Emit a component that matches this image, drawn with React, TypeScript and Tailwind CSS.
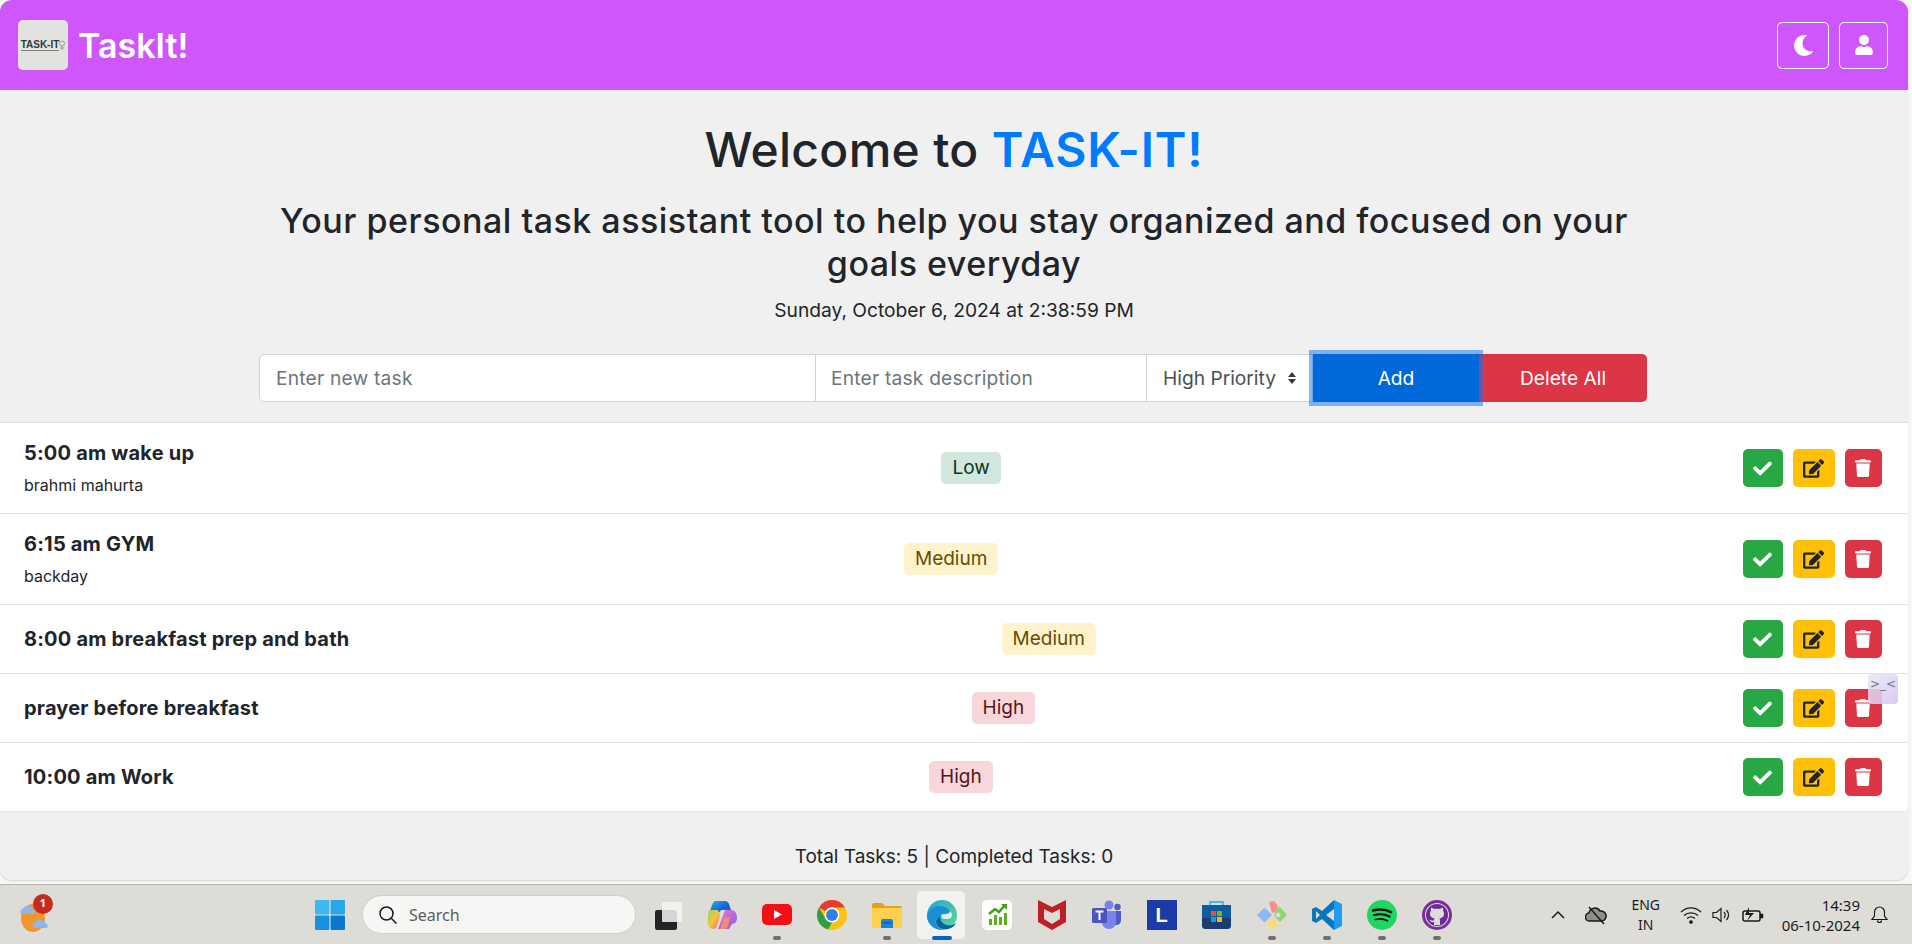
import React from 'react';
import { FaCheck, FaEdit, FaMoon, FaTrash, FaUser } from 'react-icons/fa';

const tasks = [
  { title: '5:00 am wake up', desc: 'brahmi mahurta', level: 'Low' },
  { title: '6:15 am GYM', desc: 'backday', level: 'Medium' },
  { title: '8:00 am breakfast prep and bath', level: 'Medium' },
  { title: 'prayer before breakfast', level: 'High' },
  { title: '10:00 am Work', level: 'High' },
];

const badgeClass: Record<string, string> = {
  Low: 'bg-[#d1e7dd] text-[#0a3622]',
  Medium: 'bg-[#fff3cd] text-[#664d03]',
  High: 'bg-[#f8d7da] text-[#58151c]',
};

const TaskRow: React.FC<{ title: string; desc?: string; level: string }> = ({ title, desc, level }) => (
  <div className={`flex items-center justify-between bg-white border-b border-[#dee2e6] pl-6 pr-[26px] ${desc ? 'h-[91px]' : 'h-[69px]'}`}>
    <div className={desc ? 'mb-[2px]' : ''}>
      <p className="text-[20px] leading-[30px] font-bold tracking-[0.2px] text-[#212529]">{title}</p>
      {desc && <p className="text-[16px] leading-6 mt-[5px] text-[#212529]">{desc}</p>}
    </div>
    <span className={`ml-[5px] rounded-[5px] h-8 px-[11px] flex items-center text-[19px] ${badgeClass[level]}`}>{level}</span>
    <div className="flex items-center gap-[10px]">
      <button className="w-10 h-[38px] rounded-[5px] bg-[#28a745] text-white flex items-center justify-center"><FaCheck size={19} /></button>
      <button className="w-[42px] h-[38px] rounded-[5px] bg-[#ffc107] text-[#212529] flex items-center justify-center"><FaEdit size={21} /></button>
      <button className="w-[37px] h-[38px] rounded-[5px] bg-[#dc3545] text-white flex items-center justify-center"><FaTrash size={18} /></button>
    </div>
  </div>
);

const WeatherIcon = () => (
  <svg width="32" height="36" viewBox="0 0 32 36">
    <ellipse cx="15" cy="21" rx="12" ry="14" fill="#f0962a" />
    <path d="M3 17a4 4 0 0 1 3-6 5 5 0 0 1 9 1 3 3 0 0 1 1 5z" fill="#8fb5ea" />
    <path d="M15 31a4 4 0 0 1 3-6 5 5 0 0 1 9 1 3 3 0 0 1 2 5z" fill="#8fb5ea" />
  </svg>
);

const StartIcon = () => (
  <svg width="30" height="30" viewBox="0 0 30 30">
    <rect x="0" y="0" width="14.4" height="14.4" rx="1" fill="#3cb9f0" />
    <rect x="15.6" y="0" width="14.4" height="14.4" rx="1" fill="#2aa7ea" />
    <rect x="0" y="15.6" width="14.4" height="14.4" rx="1" fill="#1791e0" />
    <rect x="15.6" y="15.6" width="14.4" height="14.4" rx="1" fill="#0b78d0" />
  </svg>
);

const SnapIcon = () => (
  <svg width="30" height="30" viewBox="0 0 30 30">
    <rect x="3" y="10" width="22" height="20" rx="2" fill="#232323" />
    <rect x="10" y="2" width="20" height="20" rx="1" fill="#f4f4f4" fillOpacity="0.85" />
  </svg>
);

const CopilotIcon = () => (
  <svg width="30" height="30" viewBox="0 0 30 30">
    <defs>
      <linearGradient id="cp1" x1="0" y1="0" x2="1" y2="1"><stop offset="0" stopColor="#27b4e8" /><stop offset="0.6" stopColor="#1a5fd0" /></linearGradient>
      <linearGradient id="cp2" x1="0" y1="0" x2="1" y2="1"><stop offset="0" stopColor="#9ad15a" /><stop offset="0.5" stopColor="#f6c53b" /><stop offset="1" stopColor="#f0637a" /></linearGradient>
      <linearGradient id="cp3" x1="0" y1="0" x2="1" y2="1"><stop offset="0" stopColor="#e87ad0" /><stop offset="1" stopColor="#8f5be0" /></linearGradient>
    </defs>
    <path d="M9 1h9c2 0 3 1 4 3l2 6H14l-3 4H2l3-9c1-3 2-4 4-4z" fill="url(#cp1)" />
    <path d="M2 10h9l2 6-3 10c-1 2-2 3-4 3-3 0-5-3-5-7 0-4 0-8 1-12z" fill="url(#cp2)" />
    <path d="M18 10h7c3 0 5 4 5 8 0 3-2 6-5 6l-3 5H11l7-19z" fill="url(#cp3)" />
    <path d="M13 29l4-11 6-1-2 9c-1 2-2 3-4 3z" fill="#f58a72" />
  </svg>
);

const YoutubeIcon = () => (
  <svg width="30" height="30" viewBox="0 0 30 30">
    <rect x="0" y="4" width="30" height="21" rx="5" fill="#f40f16" />
    <path d="M12 10l8 4.500-8 4.500z" fill="#fff" />
  </svg>
);

const ChromeIcon = () => (
  <svg width="30" height="30" viewBox="0 0 48 48">
    <circle cx="24" cy="24" r="24" fill="#fbc116" />
    <path d="M24 0a24 24 0 0 1 20.800 12H24a12 12 0 0 0-10.400 6L3.200 12A24 24 0 0 1 24 0z" fill="#e33b2e" />
    <path d="M3.200 12l10.400 18a12 12 0 0 0 10.400 6l-6.200 11.200A24 24 0 0 1 3.200 12z" fill="#2f9e44" />
    <circle cx="24" cy="24" r="12" fill="#fff" />
    <circle cx="24" cy="24" r="9.500" fill="#2f7fe8" />
  </svg>
);

const FolderIcon = () => (
  <svg width="30" height="30" viewBox="0 0 30 30">
    <path d="M0 5a2 2 0 0 1 2-2h8l3 3h15a2 2 0 0 1 2 2v2H0z" fill="#e4a11a" />
    <path d="M0 8h30v19a1 1 0 0 1-1 1H1a1 1 0 0 1-1-1z" fill="#fdd14f" />
    <path d="M9 21a2 2 0 0 1 2-2h8a2 2 0 0 1 2 2v7H9z" fill="#1b84d6" />
    <rect x="11" y="22" width="8" height="1.500" fill="#0d5ea8" />
  </svg>
);

const EdgeIcon = () => (
  <svg width="30" height="30" viewBox="0 0 30 30">
    <defs>
      <linearGradient id="eg1" x1="0" y1="0" x2="1" y2="1"><stop offset="0" stopColor="#2aa5d8" /><stop offset="1" stopColor="#5fd88a" /></linearGradient>
    </defs>
    <circle cx="15" cy="15" r="15" fill="url(#eg1)" />
    <path d="M0 16C1 9 7 6 12 6c6 0 11 3 12 8 0 3-3 4-7 4-3 0-4-1-4-2-3 1-5 4-4 8 1 3 4 5 7 6C7 30 0 24 0 16z" fill="#1b8fd6" />
    <path d="M13 16c-3 2-5 5-3 9 2 3 6 5 11 4 4-1 7-3 8-6-3 3-9 3-12 1-3-2-4-5-4-8z" fill="#0f5ea8" />
    <path d="M14 16c0 2 2 3 5 3 3 0 6-1 6-4 0-1-1-3-2-4 0 2-2 3-5 3-2 0-3 0-4 2z" fill="#fff" fillOpacity="0.85" />
  </svg>
);

const ChartIcon = () => (
  <svg width="30" height="30" viewBox="0 0 30 30">
    <rect width="30" height="30" rx="5" fill="#fff" />
    <path d="M7 14l6-5 4 3 6-7" stroke="#3aa514" strokeWidth="2.500" fill="none" />
    <path d="M19 4h6v6z" fill="#3aa514" />
    <rect x="7" y="19" width="3" height="6" fill="#5db11f" />
    <rect x="12" y="15" width="3" height="10" fill="#5db11f" />
    <rect x="17" y="17" width="3" height="8" fill="#5db11f" />
    <rect x="22" y="13" width="3" height="12" fill="#5db11f" />
  </svg>
);

const McafeeIcon = () => (
  <svg width="28" height="30" viewBox="0 0 28 30">
    <path d="M0 0l14 7 14-7v22l-14 8-14-8z" fill="#c01f26" />
    <path d="M6 9l8 4 8-4v10l-8 5-8-5z" fill="#dddcd7" />
  </svg>
);

const TeamsIcon = () => (
  <svg width="30" height="30" viewBox="0 0 30 30">
    <circle cx="17" cy="5" r="4.500" fill="#7b83eb" />
    <circle cx="25.500" cy="7" r="3.200" fill="#5059c9" />
    <path d="M21 11h8v9c0 3-2 5-5 5-1 0-2 0-3-1z" fill="#5059c9" />
    <path d="M10 11h14v11c0 4-3 7-7 7-4 0-7-3-7-7z" fill="#7b83eb" />
    <rect x="0" y="8" width="15" height="15" rx="1.500" fill="#4b53bc" />
    <path d="M3.500 11.500h8M7.500 11.500V20" stroke="#fff" strokeWidth="2" />
  </svg>
);

const LIcon = () => (
  <div className="w-[30px] h-[30px] bg-[#1c3aa8] flex items-center justify-center text-white font-bold text-[20px] font-['Liberation_Sans',sans-serif]">L</div>
);

const StoreIcon = () => (
  <svg width="30" height="30" viewBox="0 0 30 30">
    <path d="M8 5V2h13v3" stroke="#35c2f0" strokeWidth="1.800" fill="none" />
    <path d="M0 5h29v20a4 4 0 0 1-4 4H4a4 4 0 0 1-4-4z" fill="#0f5ca0" />
    <path d="M0 18h29v7a4 4 0 0 1-4 4H4a4 4 0 0 1-4-4z" fill="#1c3d72" />
    <rect x="9" y="11" width="5" height="5" fill="#f25022" />
    <rect x="15" y="11" width="5" height="5" fill="#7fba00" />
    <rect x="9" y="17" width="5" height="5" fill="#00a4ef" />
    <rect x="15" y="17" width="5" height="5" fill="#ffb900" />
  </svg>
);

const KrakenIcon = () => (
  <svg width="30" height="30" viewBox="0 0 30 30">
    <path d="M15 15L7.500 7.500 0 15l7.500 7.500z" fill="#8cb8f8" />
    <path d="M12 2l5-1 4 5-3 6-3 1z" fill="#f98b8b" />
    <path d="M19 9l4-2 7 8-7 7-6-6z" fill="#8fd46c" />
    <circle cx="21" cy="15" r="2.500" fill="#dddcd7" />
    <path d="M9 23l6-6 7 7-7 6z" fill="#f8dc7a" />
  </svg>
);

const VscodeIcon = () => (
  <svg width="30" height="30" viewBox="0 0 30 30">
    <path d="M22 0l8 4v22l-8 4-12-12 12-9z" fill="#1f9cf0" />
    <path d="M22 0v30L10 19l-6 4-4-2v-12l4-2 6 4z" fill="#0a76c0" />
    <path d="M22 9l-8 6 8 6z" fill="#dddcd7" />
    <path d="M4 11v8l4-4z" fill="#dddcd7" />
  </svg>
);

const SpotifyIcon = () => (
  <svg width="30" height="30" viewBox="0 0 30 30">
    <circle cx="15" cy="15" r="15" fill="#1ed760" />
    <path d="M6 10.500c6-1.500 13-1 18 1.700" stroke="#111" strokeWidth="2.600" strokeLinecap="round" fill="none" />
    <path d="M7 15c5-1.200 11-.8 15.500 1.500" stroke="#111" strokeWidth="2.200" strokeLinecap="round" fill="none" />
    <path d="M8 19.500c4-1 9-.6 12.500 1.200" stroke="#111" strokeWidth="1.800" strokeLinecap="round" fill="none" />
  </svg>
);

const GithubIcon = () => (
  <svg width="30" height="30" viewBox="0 0 30 30">
    <circle cx="15" cy="15" r="13.500" fill="#dddcd7" stroke="#7a2e9e" strokeWidth="3" />
    <circle cx="15" cy="15" r="11" fill="#6e2a96" />
    <path d="M12 25v-3c-3 .6-4-1-4.500-2.500.8 0 1.600 1.500 4.500 1 0-1 .3-1.500.6-2-2.500-.5-4.600-1.600-4.600-5 0-1.200.4-2 1-2.800-.2-.6-.3-1.700.1-3 1.200 0 2.200.7 3 1.300 1.600-.4 4.200-.4 5.800 0 .8-.6 1.800-1.300 3-1.300.4 1.300.3 2.400.1 3 .6.800 1 1.600 1 2.800 0 3.400-2.100 4.500-4.600 5 .4.500.6 1.100.6 2v4.500z" fill="#dddcd7" />
  </svg>
);

const apps: { el: React.ReactNode; dot?: boolean }[] = [
  { el: <SnapIcon /> },
  { el: <CopilotIcon /> },
  { el: <YoutubeIcon />, dot: true },
  { el: <ChromeIcon /> },
  { el: <FolderIcon />, dot: true },
  { el: <EdgeIcon /> },
  { el: <ChartIcon /> },
  { el: <McafeeIcon /> },
  { el: <TeamsIcon /> },
  { el: <LIcon /> },
  { el: <StoreIcon /> },
  { el: <KrakenIcon />, dot: true },
  { el: <VscodeIcon />, dot: true },
  { el: <SpotifyIcon />, dot: true },
  { el: <GithubIcon />, dot: true },
];

const Taskbar = () => (
  <div className="h-[60px] shrink-0 bg-[#dddcd7] border-t border-[#b5b5b2] flex items-center font-['Noto_Sans',sans-serif] text-[#1c1c1c]">
    <div className="relative ml-[18px] w-[32px] h-[36px]">
      <WeatherIcon />
      <span className="absolute -top-[3px] left-[15px] w-5 h-5 rounded-full bg-[#c42b1c] text-white text-[11px] font-bold flex items-center justify-center">1</span>
    </div>
    <div className="ml-[265px]"><StartIcon /></div>
    <div className="ml-[17px] w-[274px] h-[39px] rounded-full bg-[#f6f6f5] border border-[#cfcfca] flex items-center pl-[15px] gap-[11px] text-[16px] text-[#5d5d5d]">
      <svg width="20" height="20" viewBox="0 0 20 20" fill="none" stroke="#1a1a1a" strokeWidth="1.500"><circle cx="8.500" cy="8.500" r="6.500" /><path d="M13.500 13.500l5 5" /></svg>
      Search
    </div>
    <div className="flex ml-[3px]">
      {apps.map((a, i) => (
        <div key={i} className="relative w-[55px] h-[48px] flex items-center justify-center">
          {i === 5 && <div className="absolute left-[3px] right-[4px] inset-y-0 rounded-[5px] bg-[#f2f2f1]" />}
          <div className="relative">{a.el}</div>
          {a.dot && <span className="absolute -bottom-[1px] left-[24px] w-2 h-[4px] rounded-full bg-[#6f6f6f]" />}
          {i === 5 && <span className="absolute -bottom-[1px] left-[18px] w-5 h-[4px] rounded-full bg-[#0067c0]" />}
        </div>
      ))}
    </div>
    <div className="flex items-center ml-auto mr-[24px]">
      <svg width="14" height="14" viewBox="0 0 14 14" fill="none" stroke="#1a1a1a" strokeWidth="1.500"><path d="M1 10l6-6 6 6" /></svg>
      <svg className="ml-[20px]" width="22" height="20" viewBox="0 0 22 20" fill="#8f8f8c" stroke="#1a1a1a" strokeWidth="1.500"><path d="M5 16a4 4 0 0 1-1-8 6 6 0 0 1 11-2 5 5 0 0 1 2 10z" /><path d="M4 2l15 17" /></svg>
      <div className="ml-[19px] w-[40px] text-center text-[14px] leading-5">ENG<br />IN</div>
      <svg className="ml-[14px]" width="22" height="18" viewBox="0 0 22 18" fill="none" stroke="#1a1a1a" strokeWidth="1.300"><path d="M1 6c6-5.500 14-5.500 20 0M4 9.500c4-3.500 10-3.500 14 0M7 12.500c2.500-2 5.500-2 8 0" /><circle cx="11" cy="16" r="1.200" fill="#1a1a1a" /></svg>
      <svg className="ml-[10px]" width="20" height="18" viewBox="0 0 20 18" fill="none" stroke="#1a1a1a" strokeWidth="1.200"><path d="M1 6.500h3.500L9 2.500v13l-4.500-4H1zM12 6c1.500 1.500 1.500 4.500 0 6M14.500 4c2.500 3 2.500 7 0 10" /></svg>
      <svg className="ml-[10px]" width="22" height="18" viewBox="0 0 22 18" fill="none" stroke="#1a1a1a" strokeWidth="1.500"><rect x="1" y="5" width="17" height="10" rx="2" /><path d="M18 8.500h2.500v3H18" fill="#1a1a1a" /><path d="M7 1L3 9h5l-3 6 7-8H7z" fill="#1a1a1a" stroke="none" /></svg>
      <div className="ml-[18px] text-right text-[15px] leading-5">14:39<br />06-10-2024</div>
      <svg className="ml-[11px]" width="17" height="18" viewBox="0 0 17 18" fill="none" stroke="#1a1a1a" strokeWidth="1.200"><path d="M8.500 1a5 5 0 0 0-5 5v4l-2.500 3.500h15L13.500 10V6a5 5 0 0 0-5-5zM6.500 14.500a2 2 0 0 0 4 0" /></svg>
    </div>
  </div>
);

const App: React.FC = () => {
  return (
    <div className="h-screen overflow-hidden flex flex-col bg-[#f7f7f7] font-['Inter',sans-serif] text-[#212529]">
      <div className="flex-1 w-[1908px] bg-[#f0f0f0] rounded-[12px] shadow-[0_1px_2px_rgba(0,0,0,0.15)] overflow-hidden mb-[4px] relative">
        <nav className="h-[90px] bg-[#cf56fb] flex items-center justify-between pl-[18px] pr-5">
          <div className="flex items-center gap-[10px]">
            <div className="w-[50px] h-[50px] rounded-[5px] bg-[#e2e3de] flex items-center justify-center">
              <span className="text-[10px] font-bold text-[#2c3a3a] border-b border-[#7b8580] leading-[11px] font-['Liberation_Sans',sans-serif]">TASK-IT</span>
              <svg width="6" height="10" viewBox="0 0 6 10" fill="none" stroke="#8c8f88" strokeWidth="0.800"><circle cx="3" cy="3.500" r="2.500" /><path d="M2 7h2v2H2z" /></svg>
            </div>
            <span className="text-[34px] font-semibold text-white">TaskIt!</span>
          </div>
          <div className="flex items-center gap-[10px]">
            <button className="w-[52px] h-[47px] rounded-[5px] border border-white text-white flex items-center justify-center"><FaMoon size={21} /></button>
            <button className="w-[49px] h-[47px] rounded-[5px] border border-white text-white flex items-center justify-center"><FaUser size={20} /></button>
          </div>
        </nav>

        <main>
          <div className="text-center">
            <h1 className="mt-[31px] text-[48px] leading-[58px] font-medium tracking-[0.3px]">
              Welcome to <span className="text-[#007bff] font-semibold tracking-[0.8px]">TASK-IT!</span>
            </h1>
            <h2 className="mt-5 mx-auto w-[1388px] text-[34px] leading-[43px] font-medium tracking-[0.5px]">
              Your personal task assistant tool to help you stay organized and focused on your goals everyday
            </h2>
            <p className="mt-[13px] text-[19.200px] leading-6">Sunday, October 6, 2024 at 2:38:59 PM</p>
          </div>

          <div className="mt-[32px] ml-[259px] flex w-[1389px] h-12 text-[19.200px]">
            <input
              placeholder="Enter new task"
              className="w-[557px] bg-white border border-[#ced4da] rounded-l-[5px] px-4 outline-none tracking-[0.2px] placeholder-[#6c757d]"
            />
            <input
              placeholder="Enter task description"
              className="w-[332px] -ml-px bg-white border border-[#ced4da] px-[15px] outline-none tracking-[0.2px] placeholder-[#6c757d]"
            />
            <div className="relative w-[167px] -ml-px">
              <select className="appearance-none w-full h-full bg-white border border-[#ced4da] rounded-none pl-4 text-[#495057] outline-none">
                <option>High Priority</option>
              </select>
              <svg className="absolute right-[15px] top-[17px]" width="12" height="14" viewBox="0 0 12 14" fill="#343a40"><path d="M6 1l4 5H2zM6 13l4-5H2z" /></svg>
            </div>
            <button className="relative z-10 w-[166px] bg-[#0069d9] text-white shadow-[0_0_0_4px_rgba(13,110,253,0.5)]">Add</button>
            <button className="w-[168px] bg-[#dc3545] text-white rounded-r-[5px]">Delete All</button>
          </div>

          <div className="mt-5 border-t border-[#dee2e6] rounded-br-[6px] overflow-hidden">
            {tasks.map((t) => (
              <TaskRow key={t.title} {...t} />
            ))}
          </div>

          <p className="mt-[33px] text-center text-[19px] leading-6">Total Tasks: 5 | Completed Tasks: 0</p>
        </main>

        <div className="absolute left-[1868px] top-[674px] w-[30px] h-[30px] rounded-[4px] bg-gradient-to-br from-[#e9e6f5]/80 to-[#d6c4f2]/90 flex items-start pt-[2px] justify-center text-[12px] leading-4 text-[#777] font-['DejaVu_Sans',sans-serif]">&gt;_&lt;</div>
      </div>
      <Taskbar />
    </div>
  );
};

export default App;
